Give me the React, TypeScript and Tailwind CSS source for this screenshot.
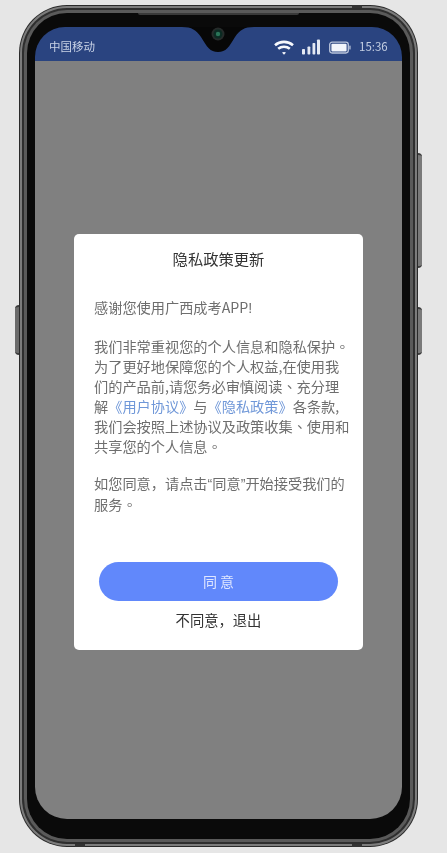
const cjk = "font-['Noto_Sans_CJK_SC','Noto_Sans',sans-serif]"

// the full-stop and pause mark sit in the middle of their cell in the screenshot
function Mark({ c }: { c: string }) {
  return <span className="font-['Noto_Sans_CJK_TC',sans-serif]">{c}</span>
}

function Quote({ c }: { c: string }) {
  return <span className="font-['Liberation_Sans',sans-serif]">{c}</span>
}

function StatusIcons() {
  return (
    <div className="flex items-center">
      {/* wifi */}
      <svg width="20" height="15" viewBox="0 0 20 15" fill="none" stroke="#f6f8fc" strokeWidth="2.600">
        <path d="M1 5.200C6 .8 14 .8 19 5.200" />
        <path d="M4.200 8.800c3.300-2.800 8.300-2.800 11.600 0" />
        <path d="M8 12.600 10 14.800l2-2.200c-1.200-.9-2.800-.9-4 0z" fill="#f6f8fc" stroke="none" />
      </svg>
      {/* signal */}
      <svg className="ml-2" width="18" height="16" viewBox="0 0 18 16" fill="#e4e9f3">
        <rect x="0" y="10" width="3" height="5.500" rx="0.8" />
        <rect x="5.500" y="7.500" width="2.800" height="8" rx="0.8" />
        <rect x="10.500" y="4" width="2.800" height="11.500" rx="0.8" />
        <rect x="15" y="0.500" width="3" height="15" rx="0.8" />
      </svg>
      {/* battery */}
      <svg className="ml-[9px]" width="22" height="13" viewBox="0 0 22 13" fill="none">
        <rect x="0.7" y="1.200" width="18.600" height="10.800" rx="2.400" stroke="#b9c4da" strokeWidth="1.300" />
        <rect x="2.400" y="2.800" width="15.200" height="7.600" rx="1" fill="#f2f5fb" />
        <rect x="20.300" y="4.500" width="1.300" height="4" rx="0.5" fill="#b9c4da" />
      </svg>
      <span className="ml-2 w-[28px] text-[11.500px] leading-none text-[#c4cfe2]">15:36</span>
    </div>
  )
}

function Notch() {
  return (
    <div className="absolute left-[182px] top-[27px] h-[26px] w-[72px]">
      <svg width="72" height="26" viewBox="0 0 72 26">
        <path d="M0 0H72C62 0 58 3 53 10 47 20 44 25 36 25 28 25 25 20 19 10 14 3 10 0 0 0z" fill="#070707" />
        <circle cx="36" cy="7" r="6.500" fill="#262b2a" />
        <circle cx="36" cy="7" r="4.500" fill="#0b2a22" />
        <circle cx="36" cy="7" r="2.200" fill="#2a7458" />
      </svg>
    </div>
  )
}

export default function App() {
  return (
    <div className={`relative flex h-[853px] w-[447px] justify-center overflow-hidden bg-[#e6e6e6] pr-[10px] pt-[5px] blur-[0.4px] ${cjk}`}>
      {/* side buttons */}
      <div className="absolute left-[15px] top-[305px] h-[50px] w-[5px] rounded-l-sm border-y-2 border-[#3c3c3c] bg-[#6a6a6a]"></div>
      <div className="absolute left-[417px] top-[153px] h-[115px] w-[5px] rounded-r-sm border-y-2 border-[#3c3c3c] bg-[#7a7a7a]"></div>
      <div className="absolute left-[417px] top-[307px] h-[48px] w-[5px] rounded-r-sm border-y-2 border-[#3c3c3c] bg-[#7a7a7a]"></div>

      <div className="relative h-[842px] w-[399px] rounded-[48px] bg-[#2a2a2a] p-px">
        <div className="h-full rounded-[47px] bg-[#7c7c7c] p-[2px]">
          <div className="h-full rounded-[45px] bg-[#2e2e2e] p-[2px]">
            <div className="h-full rounded-[43px] bg-[#5a5a5a] p-[3px]">
              <div className="flex h-full flex-col rounded-[40px] bg-[#0a0a0a] px-2 pb-5 pt-[14px]">
                <div className="flex flex-1 flex-col overflow-hidden rounded-b-[32px] rounded-t-[30px]">
                  <div className="flex h-[34px] items-center justify-between bg-[#2a4480] pl-[14px] pr-[15px] pt-[6px]">
                    <span className="text-[11.500px] leading-none text-[#c9d3e6]">中国移动</span>
                    <StatusIcons />
                  </div>
                  <div className="flex flex-1 items-center justify-center bg-[#808080] pt-[4px]">
                    <div className="h-[416px] w-[289px] rounded-[5px] bg-white pb-[19px] pl-5 pr-2 pt-[14px]">
                      <h1 className="pr-3 text-center text-[15.300px] font-normal leading-5 text-[#333333]">隐私政策更新</h1>
                      <div className="mt-[29px] text-[14.200px] leading-5 text-[#6e6e6e]">
                        <p>感谢您使用广西成考APP<Quote c="!" /></p>
                        <p className="mt-[18px]">
                          我们非常重视您的个人信息和隐私保护<Mark c="。" /><br />
                          为了更好地保障您的个人权益,在使用我<br />
                          们的产品前,请您务必审慎阅读<Mark c="、" />充分理<br />
                          解<span className="text-[#6f97d8]">《用户协议》</span>与<span className="text-[#6f97d8]">《隐私政策》</span>各条款,<br />
                          我们会按照上述协议及政策收集<Mark c="、" />使用和<br />
                          共享您的个人信息<Mark c="。" />
                        </p>
                        <p className="mt-[17px]">
                          如您同意，请点击<Quote c="“" />同意<Quote c="”" />开始接受我们的<br />
                          服务<Mark c="。" />
                        </p>
                      </div>
                      <button className="ml-[5px] mt-[48px] h-[39px] w-[239px] rounded-full bg-[#6188fb] text-[14px] text-[#dfe6ff]">同 意</button>
                      <div className="mt-[9px] pr-3 text-center text-[14.300px] leading-5 text-[#333333]">不同意，退出</div>
                    </div>
                  </div>
                </div>
              </div>
            </div>
          </div>
        </div>
      </div>

      <Notch />
      {/* speaker slit and antenna bands */}
      <div className="absolute left-[138px] top-[13px] h-[2px] w-[161px] rounded-b-sm bg-[#3a3a3a]"></div>
      <div className="absolute left-[352px] top-[5px] h-[3px] w-[10px] bg-[#333333]"></div>
      <div className="absolute left-[75px] top-[844px] h-[3px] w-[10px] bg-[#333333]"></div>
      <div className="absolute left-[352px] top-[844px] h-[3px] w-[10px] bg-[#333333]"></div>
    </div>
  )
}
